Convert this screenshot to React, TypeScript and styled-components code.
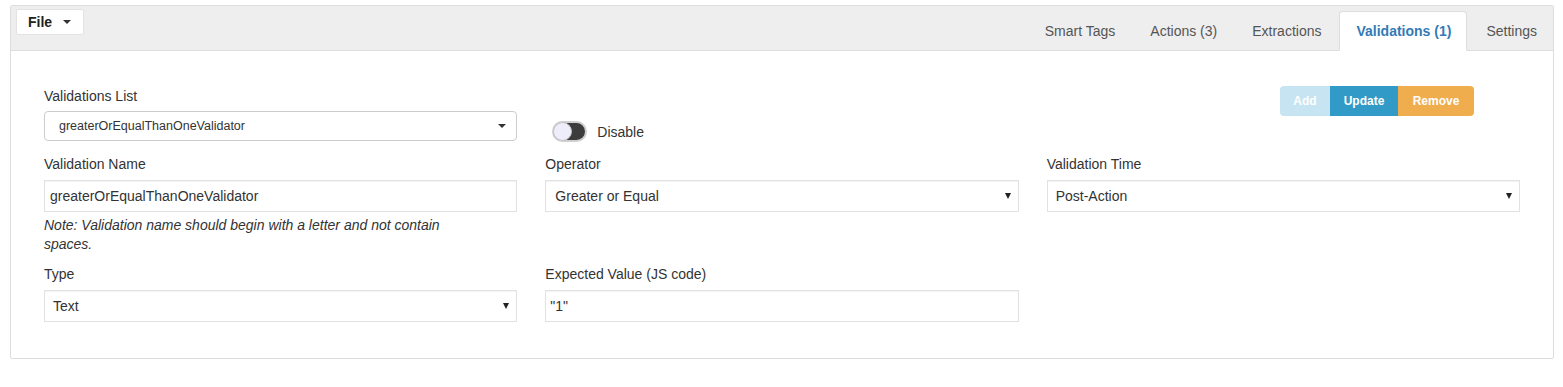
import React from 'react';
import styled, { createGlobalStyle } from 'styled-components';

const GlobalStyle = createGlobalStyle`
  html, body {
    margin: 0;
    padding: 0;
    background: #fff;
    font-family: "Liberation Sans", Arial, sans-serif;
    color: #333;
  }
  * {
    box-sizing: border-box;
  }
`;

const Page = styled.div`
  padding: 5px 9px 0 10px;
`;

const Panel = styled.div`
  border: 1px solid #ddd;
  border-radius: 2px;
`;

const Header = styled.div`
  display: flex;
  justify-content: space-between;
  height: 45px;
  padding: 3px 0 0 5px;
  background: #eee;
  border-bottom: 1px solid #ddd;
`;

const FileButton = styled.div`
  display: flex;
  align-items: center;
  gap: 11px;
  width: 68px;
  height: 26px;
  padding-left: 11px;
  background: #fff;
  border: 1px solid #e3e3e3;
  border-radius: 2px;
  font-size: 14px;
  font-weight: bold;
  color: #222;
`;

const Caret = styled.span<{ $w?: number; $h?: number; $color?: string }>`
  display: inline-block;
  width: 0;
  height: 0;
  border-left: ${({ $w }) => ($w ?? 8) / 2}px solid transparent;
  border-right: ${({ $w }) => ($w ?? 8) / 2}px solid transparent;
  border-top: ${({ $h }) => $h ?? 4}px solid ${({ $color }) => $color ?? '#333'};
`;

const Tabs = styled.ul`
  display: flex;
  align-self: flex-end;
  margin: 0 0 -1px 0;
  padding: 0;
  list-style: none;
`;

const Tab = styled.li<{ $active?: boolean }>`
  margin-right: 2px;
  padding: 9px 15px 9px 16px;
  line-height: 20px;
  font-size: 14px;
  border: 1px solid ${({ $active }) => ($active ? '#ddd' : 'transparent')};
  border-bottom-color: ${({ $active }) => ($active ? '#fff' : 'transparent')};
  border-radius: 4px 4px 0 0;
  background: ${({ $active }) => ($active ? '#fff' : 'transparent')};
  color: ${({ $active }) => ($active ? '#337ab7' : '#555')};
  font-weight: ${({ $active }) => ($active ? 'bold' : 'normal')};
  &:last-child {
    margin-right: 0;
  }
`;

const Body = styled.div`
  padding: 35px 33px 36px;
`;

const Grid = styled.div`
  display: grid;
  grid-template-columns: repeat(3, 1fr);
  column-gap: 28px;
`;

const Field = styled.div<{ $top?: number }>`
  display: flex;
  flex-direction: column;
  margin-top: ${({ $top }) => $top ?? 0}px;
`;

const Label = styled.label<{ $gap?: number }>`
  font-size: 14px;
  line-height: 20px;
  margin-bottom: ${({ $gap }) => $gap ?? 6}px;
  color: #333;
`;

const Box = styled.div<{ $pad?: number; $small?: boolean; $rounded?: boolean }>`
  display: flex;
  align-items: center;
  justify-content: space-between;
  height: ${({ $small }) => ($small ? 30 : 32)}px;
  padding: 0 ${({ $small }) => ($small ? 10 : 7)}px 0 ${({ $pad }) => $pad ?? 5}px;
  background: #fff;
  border: 1px solid ${({ $rounded }) => ($rounded ? '#ccc' : '#e2e2e2')};
  border-radius: ${({ $rounded }) => ($rounded ? 4 : 0)}px;
  box-shadow: ${({ $rounded }) => ($rounded ? 'none' : 'inset 0 1px 1px rgba(0,0,0,0.05)')};
  font-size: ${({ $small }) => ($small ? 12.5 : 14)}px;
  color: #333;
`;

const Note = styled.div`
  max-width: 420px;
  margin-top: 4px;
  font-size: 14px;
  line-height: 19px;
  font-style: italic;
  color: #333;
`;

const ToggleRow = styled.div`
  display: flex;
  align-items: center;
  gap: 10px;
  margin: 35px 0 0 7px;
  font-size: 14px;
  color: #333;
`;

const Switch = styled.span`
  position: relative;
  display: inline-block;
  width: 35px;
  height: 21px;
  border-radius: 11px;
  background: #3c3c3c;
  border: 2px solid #cfcfcf;
`;

const Knob = styled.span`
  position: absolute;
  left: -1px;
  top: -1px;
  width: 19px;
  height: 19px;
  border-radius: 50%;
  background: #eeedfb;
  border: 1px solid #c4c4c4;
`;

const ButtonCell = styled.div`
  display: flex;
  justify-content: flex-end;
  align-items: flex-start;
  padding-right: 46px;
`;

const ButtonGroup = styled.div`
  display: flex;
`;

const Btn = styled.button<{ $bg: string; $w: number }>`
  width: ${({ $w }) => $w}px;
  height: 30px;
  border: none;
  margin: 0;
  padding: 0;
  background: ${({ $bg }) => $bg};
  color: #fff;
  font-family: "Liberation Sans", Arial, sans-serif;
  font-size: 12px;
  font-weight: bold;
  &:first-child {
    border-radius: 4px 0 0 4px;
  }
  &:last-child {
    border-radius: 0 4px 4px 0;
  }
`;

const SelectBox: React.FC<{ value: string; pad?: number }> = ({ value, pad }) => (
  <Box $pad={pad}>
    <span>{value}</span>
    <Caret $w={7} $h={6} $color="#222" />
  </Box>
);

const App: React.FC = () => {
  return (
    <Page>
      <GlobalStyle />
      <Panel>
        <Header>
          <FileButton>
            File <Caret $w={9} $h={4} />
          </FileButton>
          <Tabs>
            <Tab>Smart Tags</Tab>
            <Tab>Actions (3)</Tab>
            <Tab>Extractions</Tab>
            <Tab $active>Validations (1)</Tab>
            <Tab>Settings</Tab>
          </Tabs>
        </Header>
        <Body>
          <Grid>
            <Field>
              <Label $gap={5}>Validations List</Label>
              <Box $small $rounded $pad={14}>
                <span>greaterOrEqualThanOneValidator</span>
                <Caret $w={9} $h={4} />
              </Box>
            </Field>
            <Field>
              <ToggleRow>
                <Switch>
                  <Knob />
                </Switch>
                Disable
              </ToggleRow>
            </Field>
            <ButtonCell>
              <ButtonGroup>
                <Btn $bg="#c6e4f1" $w={50}>Add</Btn>
                <Btn $bg="#319ac6" $w={68}>Update</Btn>
                <Btn $bg="#f0ad4e" $w={76}>Remove</Btn>
              </ButtonGroup>
            </ButtonCell>

            <Field $top={12}>
              <Label>Validation Name</Label>
              <Box $pad={5}>greaterOrEqualThanOneValidator</Box>
              <Note>Note: Validation name should begin with a letter and not contain spaces.</Note>
            </Field>
            <Field $top={12}>
              <Label>Operator</Label>
              <SelectBox value="Greater or Equal" pad={9} />
            </Field>
            <Field $top={12}>
              <Label>Validation Time</Label>
              <SelectBox value="Post-Action" pad={8} />
            </Field>

            <Field $top={10}>
              <Label>Type</Label>
              <SelectBox value="Text" pad={8} />
            </Field>
            <Field $top={10}>
              <Label>Expected Value (JS code)</Label>
              <Box $pad={4}>"1"</Box>
            </Field>
          </Grid>
        </Body>
      </Panel>
    </Page>
  );
};

export default App;
